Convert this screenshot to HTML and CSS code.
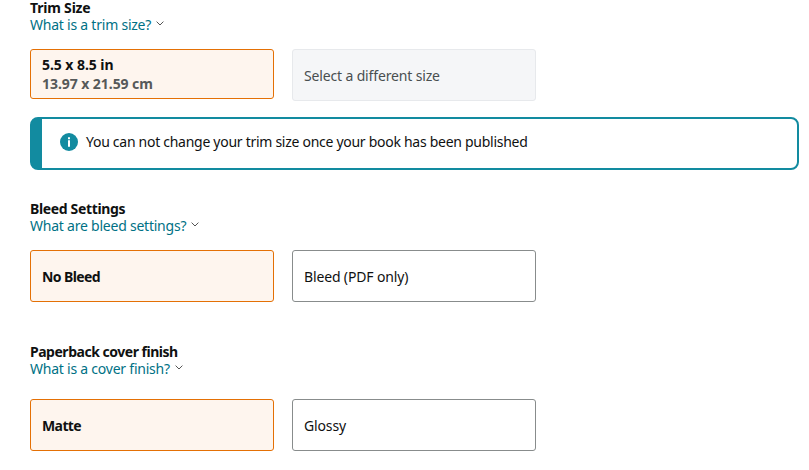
FILE: index.html
```html
<!DOCTYPE html>
<html lang="en">
<head>
  <meta charset="UTF-8">
  <meta name="viewport" content="width=device-width, initial-scale=1.0">
  <title>Print Options</title>
  <link rel="stylesheet" href="styles.css">
</head>
<body>
  <section class="setting trim">
    <h3>Trim Size</h3>
    <a class="help" href="#"><span>What is a trim size?</span><svg class="chevron" viewBox="0 0 8 5"><path d="M0.6 0.6 L4 4 L7.4 0.6"/></svg></a>
    <div class="options">
      <div class="option selected size">
        <strong>5.5 x 8.5 in</strong>
        <strong class="metric">13.97 x 21.59 cm</strong>
      </div>
      <div class="option disabled">Select a different size</div>
    </div>
    <div class="alert">
      <svg class="info" viewBox="0 0 18 18"><circle cx="9" cy="9" r="9"/><path d="M8 4.2h2v2H8zM8 7.2h2v6.6H8z"/></svg>
      <span>You can not change your trim size once your book has been published</span>
    </div>
  </section>

  <section class="setting bleed">
    <h3>Bleed Settings</h3>
    <a class="help" href="#"><span>What are bleed settings?</span><svg class="chevron" viewBox="0 0 8 5"><path d="M0.6 0.6 L4 4 L7.4 0.6"/></svg></a>
    <div class="options">
      <div class="option selected"><strong>No Bleed</strong></div>
      <div class="option">Bleed (PDF only)</div>
    </div>
  </section>

  <section class="setting finish">
    <h3>Paperback cover finish</h3>
    <a class="help" href="#"><span>What is a cover finish?</span><svg class="chevron" viewBox="0 0 8 5"><path d="M0.6 0.6 L4 4 L7.4 0.6"/></svg></a>
    <div class="options">
      <div class="option selected"><strong>Matte</strong></div>
      <div class="option">Glossy</div>
    </div>
  </section>
</body>
</html>
```
FILE: styles.css
```css
* {
  box-sizing: border-box;
}
body {
  margin: 0;
  padding: 0 10px 0 30px;
  height: 470px;
  overflow: hidden;
  background: #fff;
  color: #0f1111;
  font-family: "Noto Sans", sans-serif;
  font-size: 14px;
  line-height: 17px;
  letter-spacing: -0.28px;
}
h3 {
  margin: 0 0 1px;
  font-size: 14px;
  line-height: 15px;
  letter-spacing: -0.35px;
}
.trim h3 {
  letter-spacing: -0.2px;
}
.help {
  display: flex;
  align-items: center;
  gap: 5px;
  color: #007185;
  text-decoration: none;
  letter-spacing: -0.23px;
}
.chevron {
  width: 8px;
  height: 5px;
  margin-bottom: 2px;
  fill: none;
  stroke: #555;
  stroke-width: 1;
}
.options {
  display: flex;
  align-items: flex-start;
  gap: 18px;
  margin-top: 16px;
}
.option {
  display: flex;
  flex-direction: column;
  justify-content: center;
  width: 244px;
  height: 52px;
  padding: 1px 11px 0;
  border: 1px solid #888c8c;
  border-radius: 3px;
  letter-spacing: -0.15px;
}
.selected {
  background: #fef5ee;
  border-color: #e47005;
  letter-spacing: -0.6px;
}
.size {
  height: 50px;
  padding: 0 11px 1px;
  line-height: 19px;
  letter-spacing: -0.06px;
}
.metric {
  color: #565959;
}
.disabled {
  background: #f5f6f8;
  border-color: #e7e9ec;
  color: #494f50;
}
.alert {
  display: flex;
  align-items: flex-start;
  gap: 8px;
  height: 53px;
  margin-top: 16px;
  padding: 14px 18px;
  border: 2px solid #128ba0;
  border-left-width: 12px;
  border-radius: 8px;
}
.info {
  width: 18px;
  height: 18px;
  fill: #128ba0;
}
.info path {
  fill: #fff;
}
.bleed {
  margin-top: 31px;
}
.finish {
  margin-top: 42px;
}
.finish h3 {
  letter-spacing: -0.48px;
}
.finish .options {
  margin-top: 22px;
}
```
